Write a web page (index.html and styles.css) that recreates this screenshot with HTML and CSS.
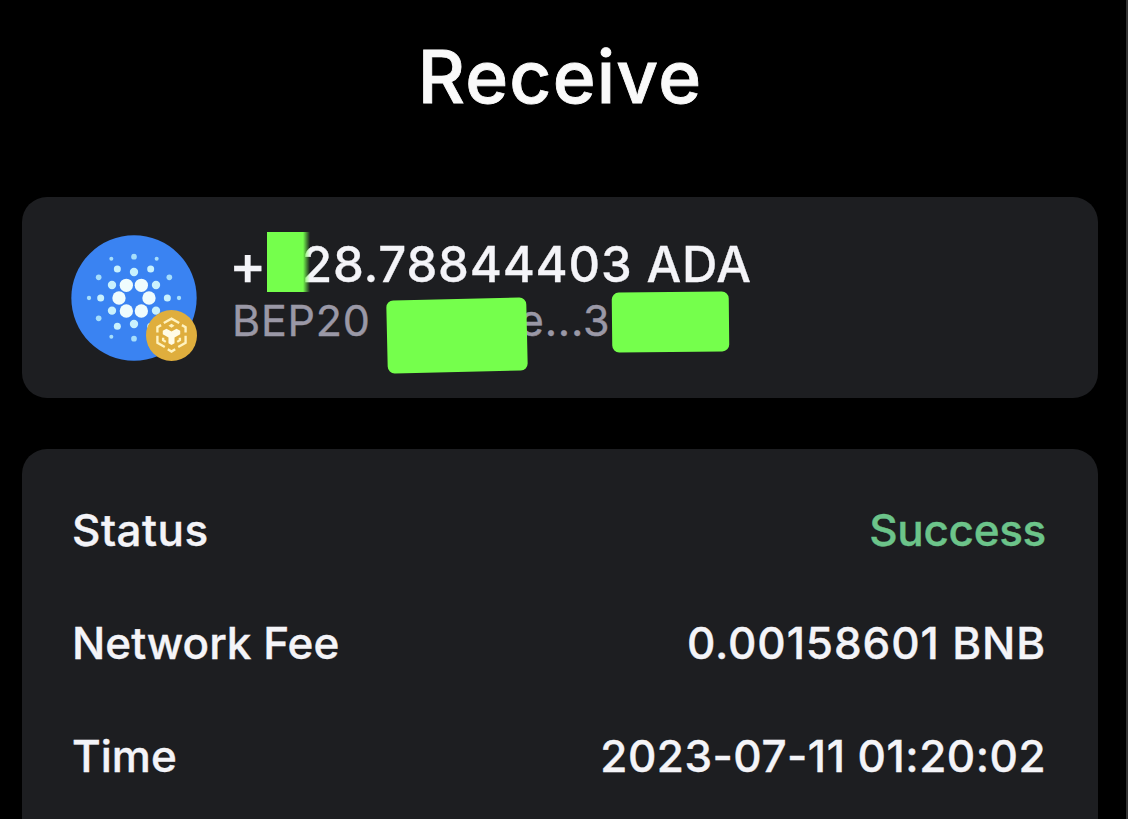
FILE: index.html
```html
<!DOCTYPE html>
<html lang="en">
<head>
    <meta charset="utf-8">
    <title>Receive</title>
    <link rel="stylesheet" href="styles.css">
</head>
<body>
    <h1 class="title">Receive</h1>

    <div class="card summary">
        <div class="token">
            <svg class="coin" viewBox="-189 -189 378 378">
                <circle r="188" fill="#3a83f2"/>
                <g fill="#effcfd">
                    <circle cx="-23" cy="-38" r="20"/>
                    <circle cx="22" cy="-38" r="20"/>
                    <circle cx="-45" cy="0" r="20"/>
                    <circle cx="45" cy="0" r="20"/>
                    <circle cx="-23" cy="39" r="20"/>
                    <circle cx="22" cy="39" r="20"/>
                </g>
                <g fill="#c9f1fd">
                    <circle cx="0" cy="-78" r="12.5"/>
                    <circle cx="-66" cy="-39" r="12.5"/>
                    <circle cx="66" cy="-39" r="12.5"/>
                    <circle cx="-66" cy="38" r="12.5"/>
                    <circle cx="66" cy="38" r="12.5"/>
                    <circle cx="0" cy="78" r="12.5"/>
                    <circle cx="-50" cy="-87" r="10.5"/>
                    <circle cx="50" cy="-87" r="10.5"/>
                    <circle cx="-100" cy="0" r="10.5"/>
                    <circle cx="100" cy="0" r="10.5"/>
                    <circle cx="-50" cy="85" r="10.5"/>
                    <circle cx="50" cy="85" r="10.5"/>
                </g>
                <g fill="#a6defb">
                    <circle cx="0" cy="-124" r="8.5"/>
                    <circle cx="-106" cy="-62" r="8.5"/>
                    <circle cx="106" cy="-62" r="8.5"/>
                    <circle cx="-106" cy="61" r="8.5"/>
                    <circle cx="0" cy="122" r="8.5"/>
                    <circle cx="-68" cy="-118" r="6"/>
                    <circle cx="68" cy="-118" r="6"/>
                    <circle cx="-135" cy="0" r="6.5"/>
                    <circle cx="135" cy="0" r="6.5"/>
                    <circle cx="-68" cy="116" r="6"/>
                </g>
            </svg>
            <svg class="network" viewBox="-76 -76 152 152">
                <circle r="76" fill="#dfae3d"/>
                <g fill="none" stroke="#fff3c0" stroke-width="7">
                    <path d="M-23 -37L0 -50L23 -37"/>
                    <path d="M-42 -9V-25L-31 -31"/>
                    <path d="M42 -9V-25L31 -31"/>
                    <path d="M-42 1V22L-20 34"/>
                    <path d="M42 1V22L20 34"/>
                    <path d="M-11 41L0 48L11 41"/>
                    <path d="M-25 7V14L-17 19"/>
                    <path d="M25 7V14L17 19"/>
                </g>
                <path fill="#fffbe6" d="M-26 -14L-15 -20L0 -12L15 -20L26 -14V-4L9 6V23L0 28L-9 23V6L-26 -4Z"/>
                <path fill="#fff3c0" d="M0 -35L9 -29L0 -23L-9 -29Z"/>
            </svg>
        </div>
        <div class="details">
            <div class="amount"><span class="sign">+</span><span class="mask mask-digit"></span>28.78844403 ADA</div>
            <div class="address">BEP20<span class="mask mask-start"></span>e...3<span class="mask mask-end"></span></div>
        </div>
    </div>

    <div class="card info">
        <div class="row">
            <span class="label status">Status</span>
            <span class="value success">Success</span>
        </div>
        <div class="row">
            <span class="label">Network Fee</span>
            <span class="value fee">0.00158601 BNB</span>
        </div>
        <div class="row">
            <span class="label">Time</span>
            <span class="value time">2023-07-11 01:20:02</span>
        </div>
    </div>
</body>
</html>
```
FILE: styles.css
```css
* {
    box-sizing: border-box;
}

body {
    font-family: Inter, "Liberation Sans", sans-serif;
    font-weight: 500;
    background-color: #000;
    color: #f4f4f8;
    margin: 0;
    height: 819px;
    padding: 0 28px 0 22px;
    border-right: 2px solid #333;
    overflow: hidden;
    white-space: nowrap;
}

.title {
    margin: 0;
    height: 197px;
    padding-top: 32px;
    font-size: 73px;
    line-height: 90px;
    font-weight: 500;
    letter-spacing: 1.2px;
    -webkit-text-stroke: 0.8px #fafafa;
    text-align: center;
    color: #fafafa;
}

.card {
    background-color: #1d1e21;
    border-radius: 25px;
}

.summary {
    height: 201px;
    display: flex;
    padding: 38px 49px 0;
}

.token {
    position: relative;
    width: 126px;
    height: 126px;
    margin-right: 35px;
}

.coin {
    display: block;
    width: 126px;
    height: 126px;
}

/* network badge sits over the coin */
.network {
    position: absolute;
    right: 0;
    bottom: 0;
    width: 51px;
    height: 51px;
}

.amount {
    display: flex;
    height: 60px;
    font-size: 49px;
    line-height: 60px;
    letter-spacing: 0.8px;
    -webkit-text-stroke: 0.3px;
}

.sign {
    width: 32px;
    margin-left: -3px;
    font-size: 56px;
}

.address {
    display: flex;
    font-size: 43px;
    line-height: 50px;
    font-weight: 400;
    letter-spacing: 0.8px;
    color: #9a98a6;
    -webkit-text-stroke: 0.4px;
}

.mask {
    background-color: #75ff4c;
    position: relative;
    flex: none;
}

.mask-digit {
    width: 43px;
    height: 60px;
    margin: -3px -8px 0 6px;
    background: linear-gradient(to right, #75ff4c 36px, rgba(117, 255, 76, 0) 43px);
}

.mask-start {
    width: 140px;
    height: 73px;
    margin: 4px -8px 0 16px;
    border-radius: 7px;
    transform: rotate(-1.3deg);
}

.mask-end {
    width: 117px;
    height: 60px;
    margin: -3px 0 0 2px;
    border-radius: 7px;
    transform: rotate(-0.6deg);
}

.info {
    margin-top: 51px;
    padding: 24px 52px 0 50px;
    height: 370px;
    border-bottom-left-radius: 0;
    border-bottom-right-radius: 0;
}

.row {
    display: flex;
    justify-content: space-between;
    align-items: center;
    height: 113px;
    font-size: 44px;
    -webkit-text-stroke: 0.4px;
}

.status {
    letter-spacing: 0.5px;
}

.success {
    color: #6cc48a;
    letter-spacing: -0.3px;
}

.fee {
    letter-spacing: 0.9px;
}

.time {
    letter-spacing: 0.5px;
}
```
